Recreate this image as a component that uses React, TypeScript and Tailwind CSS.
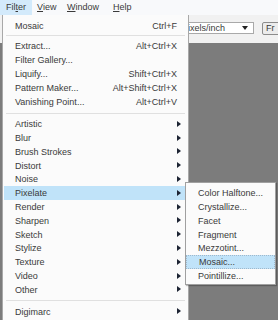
import type { ReactNode } from "react";

const topItems: { label: string; shortcut?: string }[] = [
	{ label: "Extract...", shortcut: "Alt+Ctrl+X" },
	{ label: "Filter Gallery..." },
	{ label: "Liquify...", shortcut: "Shift+Ctrl+X" },
	{ label: "Pattern Maker...", shortcut: "Alt+Shift+Ctrl+X" },
	{ label: "Vanishing Point...", shortcut: "Alt+Ctrl+V" },
];

const groups = [
	"Artistic",
	"Blur",
	"Brush Strokes",
	"Distort",
	"Noise",
	"Pixelate",
	"Render",
	"Sharpen",
	"Sketch",
	"Stylize",
	"Texture",
	"Video",
	"Other",
];

const pixelate = [
	"Color Halftone...",
	"Crystallize...",
	"Facet",
	"Fragment",
	"Mezzotint...",
	"Mosaic...",
	"Pointillize...",
];

function Arrow() {
	return (
		<span className="-mt-[2px] h-0 w-0 border-y-[3px] border-l-[4px] border-y-transparent border-l-[#1d2433]" />
	);
}

function Separator() {
	return (
		<div className="flex h-[8px] items-center px-[3px]">
			<div className="h-px w-full bg-[#e0e0e0]" />
		</div>
	);
}

function MenuBarItem({ children, active, width }: { children: ReactNode; active?: boolean; width: string }) {
	return (
		<div
			className={`flex h-full items-center pl-[5px] pt-px ${width} ${active ? "bg-[#d3eafb] pl-[6px]" : ""}`}
		>
			{children}
		</div>
	);
}

export default function App() {
	return (
		<div
			className="relative h-[320px] w-[278px] overflow-hidden bg-[#f3f3f3] text-[9px] text-[#3a3a3a]"
			style={{ fontFamily: '"Liberation Sans", Arial, sans-serif' }}
		>
			{/* menu bar */}
			<div className="flex h-[15px] bg-[#f8f9fb]">
				<MenuBarItem active width="w-[32px]">
					Fil<span className="underline">t</span>er
				</MenuBarItem>
				<MenuBarItem width="w-[30px]">
					<span className="underline">V</span>iew
				</MenuBarItem>
				<MenuBarItem width="w-[46px]">
					<span className="underline">W</span>indow
				</MenuBarItem>
				<MenuBarItem width="w-[30px]">
					<span className="underline">H</span>elp
				</MenuBarItem>
			</div>

			{/* options bar behind the menu */}
			<div className="flex h-[28px] items-center overflow-hidden bg-[#f1f1f1] pb-[2px] pl-[187px]">
				<div className="flex h-[12px] w-[67px] shrink-0 items-center justify-between border-y border-r border-[#a9a9a9] bg-white pl-[1px] pr-[5px] pt-px">
					<span>ixels/inch</span>
					<span className="-mt-px h-0 w-0 border-x-[3px] border-t-[4px] border-x-transparent border-t-[#222]" />
				</div>
				<div className="ml-[8px] flex h-[13px] w-[30px] shrink-0 items-center rounded-[2px] border border-[#8c8c8c] bg-[#ececec] pl-[3px] pt-px">
					Fr
				</div>
			</div>

			{/* canvas */}
			<div className="h-[277px] bg-[#7c7c7c]" />

			{/* Filter menu */}
			<div className="absolute left-[2px] top-[15px] h-[310px] w-[187px] border-x border-[#a8a8a8] bg-[#fbfbfb] pt-[4px]">
				<div className="flex h-[13px] items-center justify-between pl-[12px] pr-[11px] pt-[2px]">
					<span>Mosaic</span>
					<span>Ctrl+F</span>
				</div>
				<div className="flex h-[7px] items-center px-[3px]">
					<div className="h-px w-full bg-[#e0e0e0]" />
				</div>
				{topItems.map((item) => (
					<div
						key={item.label}
						className="flex h-[14px] items-center justify-between pl-[12px] pr-[11px] pt-[2px]"
					>
						<span>{item.label}</span>
						<span>{item.shortcut}</span>
					</div>
				))}
				<Separator />
				{groups.map((g) => (
					<div
						key={g}
						className={`mx-px flex h-[13.8px] items-center justify-between pl-[11px] pr-[6px] pt-[2px] ${
							g === "Pixelate" ? "bg-[#c0e3f9]" : ""
						}`}
					>
						<span>{g}</span>
						<Arrow />
					</div>
				))}
				<Separator />
				<div className="flex h-[13.8px] items-center justify-between pl-[12px] pr-[7px] pt-[2px]">
					<span>Digimarc</span>
					<Arrow />
				</div>
			</div>

			{/* Pixelate submenu */}
			<div className="absolute left-[185px] top-[182px] w-[91px] border border-[#a0a0a0] bg-[#fbfbfb] pb-px pt-[3px] shadow-[1px_1px_1px_rgba(0,0,0,0.25)]">
				{pixelate.map((p) => (
					<div
						key={p}
						className={`flex h-[13.8px] items-center pl-[12px] pt-[2px] ${
							p === "Mosaic..." ? "border border-dotted border-[#9fb8cc] bg-[#c0e3f9] pl-[11px]" : ""
						}`}
					>
						{p}
					</div>
				))}
			</div>
		</div>
	);
}
